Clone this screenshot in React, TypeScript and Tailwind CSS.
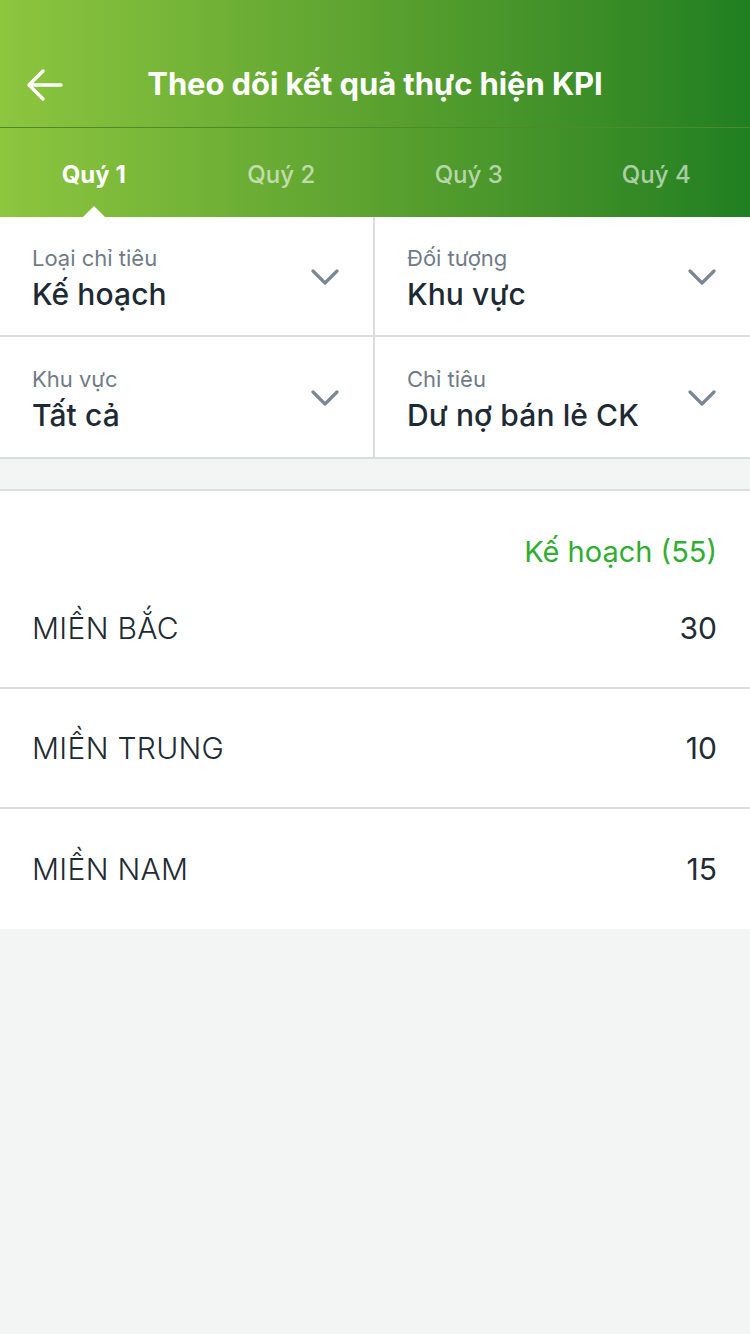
import React from "react";

const FONT = { fontFamily: "Inter, 'Noto Sans', sans-serif" };

const tabs = ["Quý 1", "Quý 2", "Quý 3", "Quý 4"];

const filters = [
  { label: "Loại chỉ tiêu", value: "Kế hoạch" },
  { label: "Đối tượng", value: "Khu vực" },
  { label: "Khu vực", value: "Tất cả" },
  { label: "Chỉ tiêu", value: "Dư nợ bán lẻ CK" },
];

const rows = [
  { name: "MIỀN BẮC", value: 30 },
  { name: "MIỀN TRUNG", value: 10 },
  { name: "MIỀN NAM", value: 15 },
];

const Chevron = () => (
  <svg width="28" height="18" viewBox="0 0 28 18" fill="none" className="shrink-0">
    <path d="M2 3l12 12L26 3" stroke="#7b8794" strokeWidth="3.2" strokeLinecap="round" strokeLinejoin="round" />
  </svg>
);

export default function App() {
  return (
    <div className="w-[750px] min-h-[1334px] bg-[#f3f4f4]" style={FONT}>
      {/* Header */}
      <div className="bg-gradient-to-r from-[#8dc63f] to-[#1f7f21] pt-10">
        <div className="relative h-[88px] flex items-center justify-center border-b border-[#4c8a2a]">
          <svg className="absolute left-[26px] top-[28px]" width="38" height="34" viewBox="0 0 38 34" fill="none">
            <path d="M35 17H4M17 3L3 17l14 14" stroke="white" strokeWidth="3.4" strokeLinecap="round" strokeLinejoin="round" />
          </svg>
          <p className="text-[31px] font-bold text-white tracking-[-0.1px] pt-[2px]">Theo dõi kết quả thực hiện KPI</p>
        </div>
        <div className="grid grid-cols-4 h-[89px]">
          {tabs.map((t, i) => (
            <div key={t} className="relative flex items-center justify-center pt-[4px]">
              <span className={i === 0 ? "text-[24px] font-bold text-white" : "text-[24px] font-medium text-white/60"}>{t}</span>
              {i === 0 && (
                <div className="absolute bottom-0 left-1/2 -translate-x-1/2 w-0 h-0 border-l-[11px] border-r-[11px] border-b-[11px] border-l-transparent border-r-transparent border-b-white" />
              )}
            </div>
          ))}
        </div>
      </div>

      {/* Filters */}
      <div className="grid grid-cols-2 bg-white border-b-2 border-[#dcdcdc]">
        {filters.map((f, i) => (
          <div
            key={f.label}
            className={
              "h-[120px] flex items-center justify-between pl-[32px] pr-[34px] " +
              (i % 2 === 0 ? "border-r-2 border-[#dcdcdc] " : "") +
              (i < 2 ? "border-b-2 border-[#dcdcdc]" : "")
            }
          >
            <div className="flex flex-col pt-[6px]">
              <span className="text-[22px] leading-[30px] text-[#6f7b87]">{f.label}</span>
              <span className="text-[30px] leading-[42px] text-[#1e2a33] font-medium tracking-[0.1px]">{f.value}</span>
            </div>
            <div className="mt-[2px]">
              <Chevron />
            </div>
          </div>
        ))}
      </div>

      {/* List */}
      <div className="mt-[30px] bg-white border-t-2 border-[#dedede]">
        <div className="flex justify-end pr-[33px] pt-[43px]">
          <span className="text-[29px] leading-[35px] text-[#2fae2f]">Kế hoạch (55)</span>
        </div>
        {rows.map((r, i) => (
          <div
            key={r.name}
            className={
              "h-[120px] flex items-center justify-between pl-[32px] pr-[33px] " +
              (i < rows.length - 1 ? "border-b-2 border-[#dadada]" : "")
            }
          >
            <span className="text-[30px] text-[#222b33] font-light tracking-[0.3px]">{r.name}</span>
            <span className="text-[30px] text-[#222b33]">{r.value}</span>
          </div>
        ))}
      </div>
    </div>
  );
}
